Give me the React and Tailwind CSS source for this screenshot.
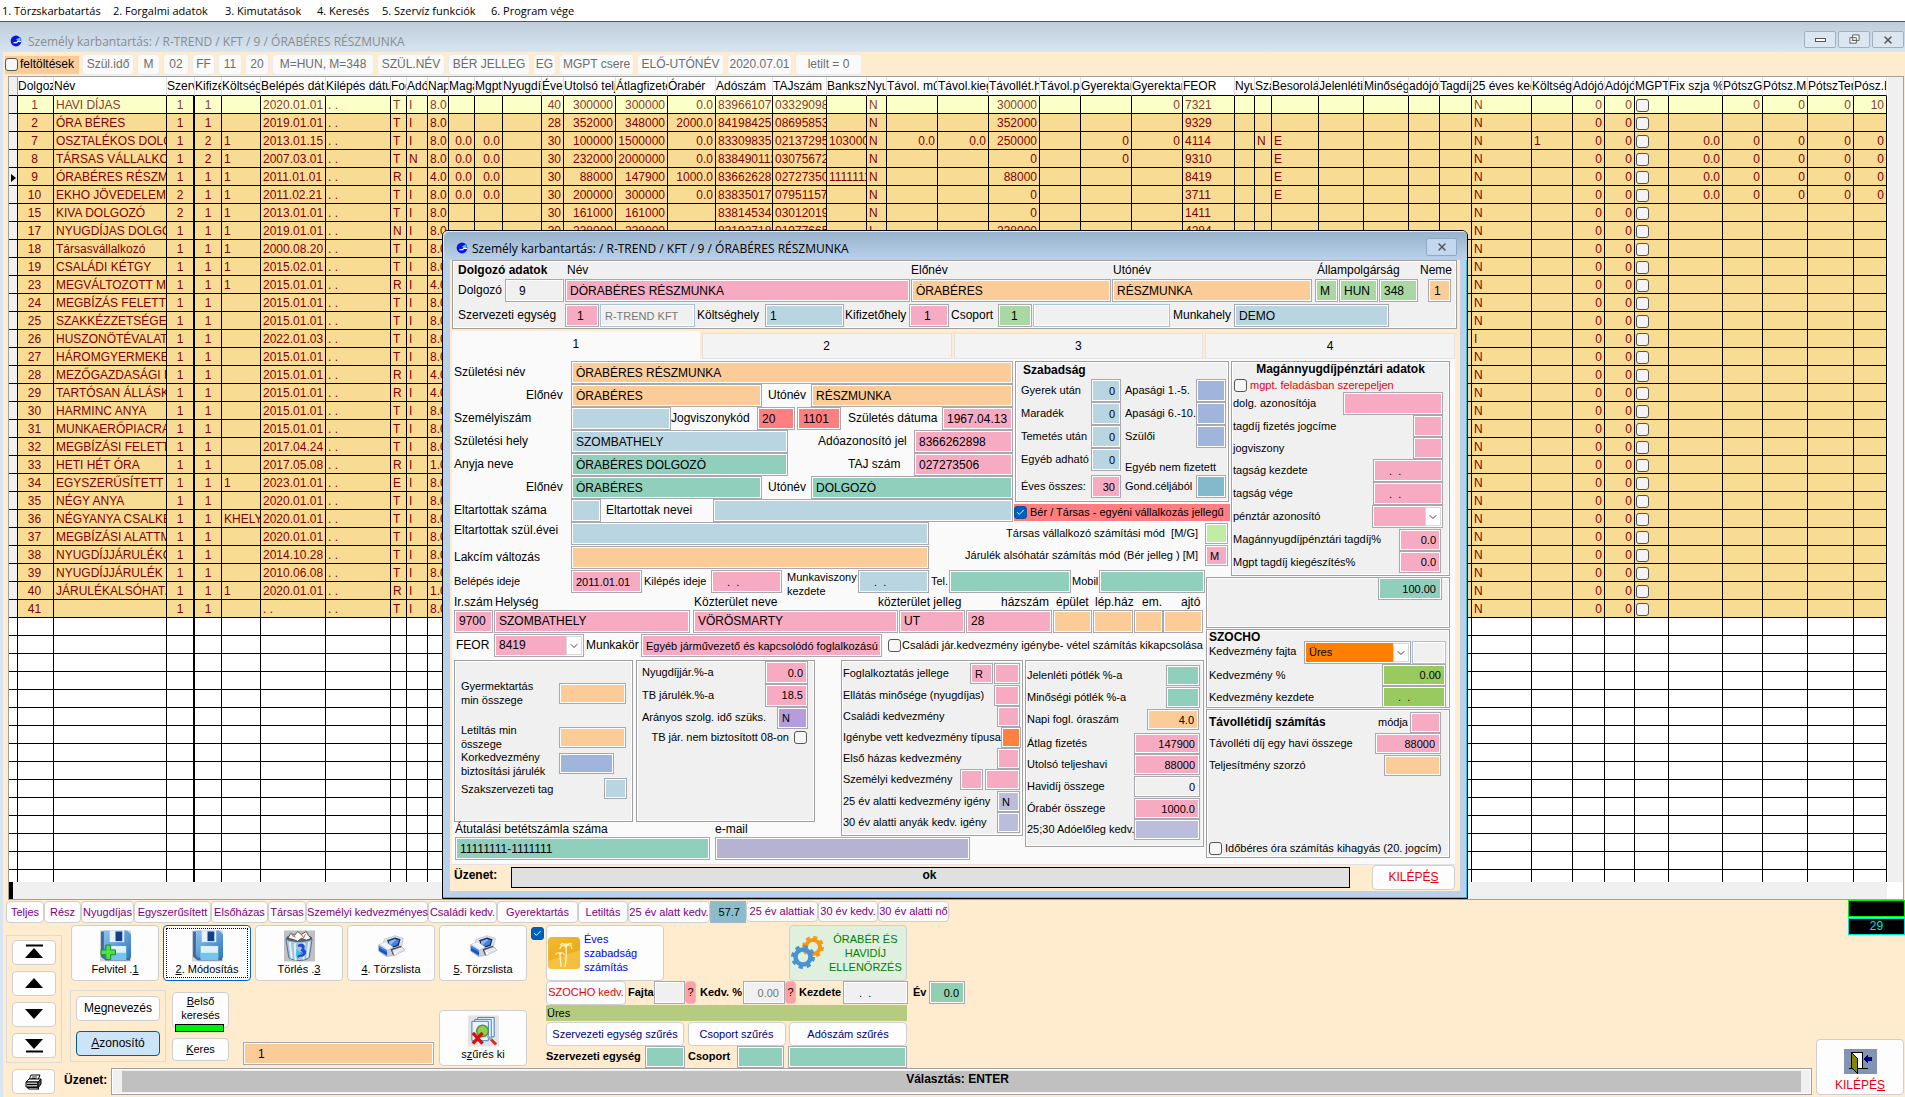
import React, { useId } from "react";
import { ChevronDown, X, Check } from "lucide-react";
import { twMerge } from "tailwind-merge";

const PINK = "bg-[#f7abc3]";
const ORANGE = "bg-[#fbcc98]";
const BLUE = "bg-[#b9d5e2]";
const TEAL = "bg-[#90cfbb]";
const GREEN = "bg-[#a9d8a2]";
const RED = "bg-[#ff7f80]";
const PERI = "bg-[#9fb5dc]";
const LAV = "bg-[#babddc]";
const GREY = "bg-[#f0f0f0]";

const inputBase =
  "min-w-0 shrink-0 rounded-none border border-[#a8a8ae] py-0 shadow-[inset_0_0_0_1px_#ffffff] outline-none";

function Field({ id, label, lc = "", name, ic = "", value = "" }) {
  const auto = useId();
  const key = id || auto;
  return (
    <>
      {label && (
        <label htmlFor={key} className={`shrink-0 whitespace-nowrap ${lc}`}>
          {label}
        </label>
      )}
      <input
        id={key}
        aria-label={label || id ? undefined : name}
        defaultValue={value}
        className={twMerge(inputBase, ic)}
      />
    </>
  );
}

function Combo({ label, lc = "", value = "", ic = "" }) {
  const key = useId();
  return (
    <>
      <label htmlFor={key} className={`shrink-0 whitespace-nowrap ${lc}`}>
        {label}
      </label>
      <span className={`relative flex h-[23px] shrink-0 ${ic}`}>
        <select
          id={key}
          defaultValue={value}
          className="w-full appearance-none rounded-none border border-[#a8a8ae] bg-transparent pl-[4px] shadow-[inset_0_0_0_1px_#ffffff]"
        >
          <option>{value}</option>
        </select>
        <span className="pointer-events-none absolute inset-y-[2px] right-[2px] flex w-[16px] items-center justify-center border border-[#d8d8d8] bg-white">
          <ChevronDown className="size-[12px] shrink-0 text-[#444]" strokeWidth={2} />
        </span>
      </span>
    </>
  );
}

function Tick({ label, checked = false, className = "", textClass = "" }) {
  return (
    <label className={`flex shrink-0 items-center whitespace-nowrap ${className}`}>
      <span className="relative flex size-[13px] shrink-0">
        <input
          type="checkbox"
          aria-label={label || "Jelölő"}
          defaultChecked={checked}
          className="peer size-[13px] appearance-none rounded-[3px] border border-[#555] bg-[#f6f6f6] checked:border-[#0058b0] checked:bg-[#005fb8]"
        />
        <Check
          className="pointer-events-none absolute inset-0 m-[2px] hidden size-[9px] text-white peer-checked:block"
          strokeWidth={2.5}
        />
      </span>
      {label && <span className={textClass}>{label}</span>}
    </label>
  );
}

function Btn({ className = "", children, ...rest }) {
  return (
    <button
      type="button"
      className={twMerge("shrink-0 whitespace-nowrap rounded-[4px] border border-[#cfcfcf]", className)}
      {...rest}
    >
      {children}
    </button>
  );
}

function Panel({ className = "", children }) {
  return (
    <section
      className={`shrink-0 border border-[#a0a0a0] bg-[#f0f0f0] shadow-[inset_0_0_0_1px_#ffffff] ${className}`}
    >
      {children}
    </section>
  );
}

/* ---------- icons ---------- */

function AppIcon() {
  return (
    <svg viewBox="0 0 12 12" className="size-[12px] shrink-0">
      <circle cx="6" cy="6" r="5.4" fill="#0b14e0" />
      <path d="M6 4.6 9.5 2.5 11 5 8 6.2z" fill="#35d8f0" />
      <path d="M3.5 7.6h3.2l1-1.2h3.6" stroke="#fff" strokeWidth="1.2" fill="none" />
    </svg>
  );
}

function Floppy({ plus }) {
  return (
    <svg viewBox="0 0 32 32" className="h-[32px] w-[31px]">
      <defs>
        <linearGradient id="flop" x1="0" y1="0" x2="1" y2="1">
          <stop offset="0" stopColor="#8fc4ee" />
          <stop offset="1" stopColor="#2f78c0" />
        </linearGradient>
      </defs>
      <rect width="32" height="32" fill="#d3d3d3" />
      <path d="M1 1h26l4 5v25H6l-5-4z" fill="#3a6ca8" />
      <path d="M4 0h24l4 4v24H6l-2-3z" fill="url(#flop)" />
      <rect x="10" y="0" width="15" height="12" fill="#e8f0fa" />
      <rect x="16" y="1" width="7" height="10" fill="#123f86" />
      <rect x="9" y="16" width="18" height="14" fill="#ddf1fb" />
      <rect x="9" y="23" width="18" height="7" fill="#6fc6ea" />
      {plus && (
        <path
          d="M6 15h5v5h5v5h-5v5H6v-5H1v-5h5z"
          fill="#4be04b"
          stroke="#1b8a1b"
          strokeWidth="1"
        />
      )}
    </svg>
  );
}

function Bin() {
  return (
    <svg viewBox="0 0 32 32" className="h-[32px] w-[31px]">
      <rect width="32" height="32" fill="#c0c0c0" />
      <path d="M2 9h27l-3 19c-5 4-16 4-21 0z" fill="#a5c3de" stroke="#54708c" />
      <path d="M6 12l2 17M11 13l1 18M21 13l-1 17M26 12l-2 16" stroke="#e6f1fa" strokeWidth="2" />
      <ellipse cx="15.500" cy="8" rx="13.500" ry="4" fill="#5b6874" />
      <path
        d="M4 8l3-5 4 2 3-4 4 3 5-3 2 4 3 3-5 2-5-2-4 3-5-2z"
        fill="#fff"
        stroke="#333"
        strokeWidth=".8"
      />
      <path d="M8 5l4 2M17 3l3 4M22 4l-2 4" stroke="#c05030" />
      <path
        d="M14 15c5-3 9 0 7 4 4 3 1 9-5 8l-2 2-1-7 6 1-2 2c3 0 3-3 0-4l1-2c2-1-1-3-3-2z"
        fill="#1d50d0"
      />
      <path d="M13 19l-1 8 6-3z" fill="#35c8ee" />
    </svg>
  );
}

function Printer() {
  return (
    <svg viewBox="0 0 32 32" className="mt-[3px] h-[32px] w-[31px]">
      <path d="M8 7 20 3l9 3-2 9-13 4-8-4z" fill="#dfe5ec" stroke="#a9b3bf" strokeWidth=".7" />
      <path d="M11 8 20 5l6 2-2 7-9 3z" fill="#1a2c58" />
      <path d="M13 9 20 6.500l4.500 1.500-2 5-7 2.500z" fill="#3f82e4" />
      <path d="M13 9 20 6.500l1 1.500-7 6z" fill="#8ab6f4" />
      <path d="M2 13 9 10l9 6-1 9-7 1-8-6z" fill="#c9ced6" stroke="#9aa2ad" strokeWidth=".6" />
      <path d="M2 14l9 5v6l-9-5.500z" fill="#1458c4" />
      <path d="M2 14l9 5v2l-9-5z" fill="#4b8bea" />
      <path d="M3 12.500 9.500 10l8 5.500-6 3z" fill="#f3f5f8" />
      <path d="M15 18 26 14l4 4-12 7z" fill="#40454e" />
      <path d="M17 19 27 15.500l4 3.500-12 6z" fill="#fdfdfd" stroke="#8c949f" strokeWidth=".6" />
      <path d="M19 20.500l8.500-3M21 22l8-3" stroke="#b9c0ca" strokeWidth=".7" />
    </svg>
  );
}

function SearchDocs() {
  return (
    <svg viewBox="0 0 32 32" className="h-[32px] w-[31px]">
      <rect width="32" height="32" fill="#e3e3e3" />
      <g fill="#eaf3fc" stroke="#3f7fd0" strokeWidth="1">
        <path d="M10 2h17v20H10z" />
        <path d="M7 4h17v20H7z" />
        <path d="M4 6h17v20H4z" />
      </g>
      <circle cx="15" cy="16" r="6" fill="#8ed048" stroke="#5a8a4a" strokeWidth="1.500" />
      <path d="M20 21 25 26" stroke="#9aa" strokeWidth="2.500" />
      <path d="M24 25 29 30" stroke="#d03020" strokeWidth="3" />
      <path d="M5 18 15 29M15 18 5 29" stroke="#d81010" strokeWidth="3.500" />
    </svg>
  );
}

function Palm() {
  return (
    <svg viewBox="0 0 32 32" className="size-[32px] shrink-0">
      <defs>
        <linearGradient id="sun" x1="0" y1="0" x2="1" y2="1">
          <stop offset="0" stopColor="#f2b92e" />
          <stop offset="1" stopColor="#eda40c" />
        </linearGradient>
      </defs>
      <rect width="32" height="32" rx="4" fill="url(#sun)" />
      <path d="M0 24 32 13v15a4 4 0 0 1-4 4H4a4 4 0 0 1-4-4z" fill="#f7cf5a" opacity=".6" />
      <g stroke="#fff3c4" strokeWidth="1.300" fill="none">
        <path d="M18 10c1 8 0 14-1 20M12 17c0 5 1 9 1 13" />
        <path d="M18 10c-3-3-6-1-6 2M18 10c-1-4-4-4-6-2M18 10c3-4 6-2 6 2M18 10c1-4 4-4 6-3M18 10V6" />
        <path d="M12 17c-2-2-4-1-4 1M12 17c2-2 4-1 4 1M12 17v-2" />
      </g>
    </svg>
  );
}

function Gears() {
  return (
    <svg viewBox="0 0 34 34" className="size-[34px] shrink-0">
      <g fill="none">
        <circle cx="22" cy="11" r="7" stroke="#f29a16" strokeWidth="4" />
        <circle cx="22" cy="11" r="9.500" stroke="#f29a16" strokeWidth="3" strokeDasharray="4 3.460" />
        <circle cx="12" cy="21" r="7.500" stroke="#4a93d2" strokeWidth="4.500" />
        <circle cx="12" cy="21" r="10.500" stroke="#4a93d2" strokeWidth="3" strokeDasharray="4.300 3.950" />
      </g>
    </svg>
  );
}

function Door() {
  return (
    <svg viewBox="0 0 33 25" className="h-[25px] w-[33px]" shapeRendering="crispEdges">
      <rect width="33" height="25" fill="#8294b4" />
      <path d="M5 19h19" stroke="#000" />
      <rect x="7" y="3" width="11" height="16" fill="#fff" stroke="#000" />
      <path d="M7 3l6 6v15l-6-6z" fill="#858500" stroke="#000" />
      <path d="M19 10l5-5v3h4v4h-4v3z" fill="#000080" />
    </svg>
  );
}

function SmallPrinter() {
  return (
    <svg viewBox="0 0 18 16" className="h-[16px] w-[18px]">
      <path d="M6 1h9l-2 5H4z" fill="#fff" stroke="#000" />
      <path d="M7 3h5M6 4.500h5" stroke="#000" strokeWidth=".8" />
      <path d="M1 8l3-3h12l-3 3z" fill="#fff" stroke="#000" />
      <path d="M1 8h12v5H1z" fill="#bbb" stroke="#000" />
      <path d="M13 8l3-3v5l-3 4z" fill="#555" stroke="#000" />
      <path d="M2 10.500h10M2 13.500h10l2 1.500H4z" stroke="#000" fill="#fff" />
    </svg>
  );
}

function Arrow({ kind }) {
  return (
    <svg viewBox="0 0 20 16" className="h-[16px] w-[20px]">
      {kind === "first" && <path d="M2 1.500h17" stroke="#000" strokeWidth="2" />}
      {kind === "first" && <path d="M10 4 19 14H1z" />}
      {kind === "up" && <path d="M10 3 19 13H1z" />}
      {kind === "down" && <path d="M10 13 19 3H1z" />}
      {kind === "last" && <path d="M10 12 19 2H1z" />}
      {kind === "last" && <path d="M2 14.500h17" stroke="#000" strokeWidth="2" />}
    </svg>
  );
}

/* ---------- grid ---------- */

const COLS = [
  ["", "w-[9px]", ""],
  ["Dolgozó", "w-[36px]", "text-center pr-[4px]"],
  ["Név", "w-[113px]", ""],
  ["Szerv", "w-[28px]", "text-center"],
  ["Kifizető", "w-[27px]", "text-center"],
  ["Költséghely", "w-[39px]", ""],
  ["Belépés dátum", "w-[65px]", ""],
  ["Kilépés dátum", "w-[65px]", ""],
  ["Fog", "w-[16px]", ""],
  ["Adó", "w-[21px]", ""],
  ["Napi", "w-[21px]", ""],
  ["Magán", "w-[26px]", "text-right"],
  ["Mgpt", "w-[28px]", "text-right"],
  ["Nyugdíj", "w-[39px]", ""],
  ["Éves", "w-[22px]", "text-right"],
  ["Utolsó teljes", "w-[52px]", "text-right"],
  ["Átlagfizetés", "w-[52px]", "text-right"],
  ["Órabér", "w-[48px]", "text-right"],
  ["Adószám", "w-[57px]", ""],
  ["TAJszám", "w-[54px]", ""],
  ["Bankszámla", "w-[40px]", ""],
  ["Nyug", "w-[20px]", ""],
  ["Távol. műszak", "w-[51px]", "text-right"],
  ["Távol.kieg", "w-[51px]", "text-right"],
  ["Távollét.havi", "w-[51px]", "text-right"],
  ["Távol.pótlék", "w-[41px]", ""],
  ["Gyerektartás", "w-[51px]", "text-right"],
  ["Gyerektartás", "w-[51px]", "text-right"],
  ["FEOR", "w-[52px]", ""],
  ["Nyug", "w-[20px]", ""],
  ["Szak", "w-[17px]", ""],
  ["Besorolás", "w-[47px]", ""],
  ["Jelenléti", "w-[45px]", ""],
  ["Minőségi", "w-[45px]", ""],
  ["adójóv", "w-[31px]", ""],
  ["Tagdíj", "w-[32px]", ""],
  ["25 éves kedv", "w-[60px]", ""],
  ["Költség", "w-[41px]", ""],
  ["Adójóv", "w-[32px]", "text-right"],
  ["Adójóv", "w-[30px]", "text-right"],
  ["MGPT", "w-[34px]", "check"],
  ["Fix szja %", "w-[54px]", "text-right"],
  ["PótszGy", "w-[40px]", "text-right"],
  ["Pótsz.Mar", "w-[45px]", "text-right"],
  ["PótszTem", "w-[46px]", "text-right"],
  ["Pósz.Egy", "w-[33px]", "text-right"],
];

const row = (no, name, unit, pay, cost, start, fo, hours, extra = {}) => ({
  1: no, 2: name, 3: unit, 4: pay, 5: cost, 6: start, 7: ". .", 8: fo, 9: "I", 10: hours,
  36: "N", 38: "0", 39: "0",
  ...extra,
});

const tail = { 31: "E", 41: "0.0", 42: "0", 43: "0", 44: "0", 45: "0" };

const ROWS = [
  row("1", "HAVI DÍJAS", "1", "1", "", "2020.01.01", "T", "8.0", { 14: "40", 15: "300000", 16: "300000", 17: "0.0", 18: "8396610722", 19: "033290982", 21: "N", 24: "300000", 27: "0", 28: "7321", 42: "0", 43: "0", 44: "0", 45: "10" }),
  row("2", "ÓRA BÉRES", "1", "1", "", "2019.01.01", "T", "8.0", { 14: "28", 15: "352000", 16: "348000", 17: "2000.0", 18: "8419842511", 19: "086958532", 21: "N", 24: "352000", 28: "9329" }),
  row("7", "OSZTALÉKOS DOLGOZÓ", "1", "2", "1", "2013.01.15", "T", "8.0", { 11: "0.0", 12: "0.0", 14: "30", 15: "100000", 16: "1500000", 17: "0.0", 18: "8330983511", 19: "021372958", 20: "10300002", 21: "N", 22: "0.0", 23: "0.0", 24: "250000", 26: "0", 27: "0", 28: "4114", 30: "N", 37: "1", ...tail }),
  row("8", "TÁRSAS VÁLLALKOZÓ", "1", "2", "1", "2007.03.01", "T", "8.0", { 9: "N", 11: "0.0", 12: "0.0", 14: "30", 15: "232000", 16: "2000000", 17: "0.0", 18: "8384901122", 19: "030756723", 21: "N", 24: "0", 26: "0", 28: "9310", ...tail }),
  row("9", "ÓRABÉRES RÉSZMUNKA", "1", "1", "1", "2011.01.01", "R", "4.0", { 11: "0.0", 12: "0.0", 14: "30", 15: "88000", 16: "147900", 17: "1000.0", 18: "8366262898", 19: "027273506", 20: "11111111", 21: "N", 24: "88000", 28: "8419", ...tail }),
  row("10", "EKHO JÖVEDELEM", "2", "1", "1", "2011.02.21", "T", "8.0", { 11: "0.0", 12: "0.0", 14: "30", 15: "200000", 16: "300000", 17: "0.0", 18: "8383501755", 19: "079511570", 21: "N", 24: "0", 28: "3711", ...tail }),
  row("15", "KIVA DOLGOZÓ", "2", "1", "1", "2013.01.01", "T", "8.0", { 14: "30", 15: "161000", 16: "161000", 18: "8381453411", 19: "030120196", 21: "N", 24: "0", 28: "1411" }),
  row("17", "NYUGDÍJAS DOLGOZÓ", "1", "1", "1", "2019.01.01", "N", "8.0", { 14: "30", 15: "238000", 16: "238000", 18: "8319271811", 19: "019776651", 21: "I", 24: "238000", 28: "4284" }),
  row("18", "Társasvállalkozó", "1", "1", "1", "2000.08.20", "T", "8.0"),
  row("19", "CSALÁDI KÉTGY", "1", "1", "1", "2015.02.01", "T", "8.0"),
  row("23", "MEGVÁLTOZOTT MUNKA", "1", "1", "1", "2015.01.01", "R", "4.0"),
  row("24", "MEGBÍZÁS FELETTNI", "1", "1", "", "2015.01.01", "T", "8.0"),
  row("25", "SZAKKÉZZETSÉGET", "1", "1", "", "2015.01.01", "T", "8.0"),
  row("26", "HUSZONÖTÉVALATTI", "1", "1", "", "2022.01.03", "T", "8.0", { 36: "I" }),
  row("27", "HÁROMGYERMEKES", "1", "1", "", "2015.01.01", "T", "8.0"),
  row("28", "MEZŐGAZDASÁGI MUN", "1", "1", "", "2015.01.01", "R", "4.0"),
  row("29", "TARTÓSAN ÁLLÁSKER", "1", "1", "", "2015.01.01", "R", "4.0"),
  row("30", "HARMINC ANYA", "1", "1", "", "2015.01.01", "T", "8.0"),
  row("31", "MUNKAERŐPIACRA", "1", "1", "", "2015.01.01", "T", "8.0"),
  row("32", "MEGBÍZÁSI FELETTI", "1", "1", "", "2017.04.24", "T", "8.0"),
  row("33", "HETI HÉT ÓRA", "1", "1", "", "2017.05.08", "R", "1.0"),
  row("34", "EGYSZERŰSÍTETT F", "1", "1", "1", "2023.01.01", "E", "8.0"),
  row("35", "NÉGY ANYA", "1", "1", "", "2020.01.01", "T", "8.0"),
  row("36", "NÉGYANYA CSALKED", "1", "1", "KHELY", "2020.01.01", "T", "8.0"),
  row("37", "MEGBÍZÁSI ALATTMI", "1", "1", "", "2020.01.01", "T", "8.0"),
  row("38", "NYUGDÍJJÁRULÉKOS", "1", "1", "", "2014.10.28", "T", "8.0"),
  row("39", "NYUGDÍJJÁRULÉK C", "1", "1", "", "2010.06.08", "T", "8.0"),
  row("40", "JÁRULÉKALSÓHATÁR", "1", "1", "1", "2020.01.01", "R", "1.0"),
  row("41", "", "1", "1", "", ". .", "T", "8.0"),
  ...Array.from({ length: 15 }, () => null),
];

function Grid() {
  return (
    <div className="ml-[5px] mr-px flex min-h-0 flex-1 flex-col border border-[#a0a0a0] bg-[#f0f0f0]">
      <div className="flex min-h-0 flex-1 overflow-hidden">
        <table className="h-0 w-[1878px] flex-1 table-fixed border-separate border-spacing-0 bg-white">
          <colgroup>
            {COLS.map((c, i) => (
              <col key={i} className={c[1]} />
            ))}
          </colgroup>
          <thead>
            <tr>
              {COLS.map((c, i) => (
                <th
                  key={i}
                  className={`h-[19px] overflow-hidden whitespace-nowrap border-b border-b-black p-0 text-left font-normal leading-[16px] ${
                    i === 0 ? "border-r border-r-[#a0a0a0] bg-[#f0f0f0]" : "border-r border-r-[#e0e0e0] bg-white"
                  }`}
                >
                  {c[0]}
                </th>
              ))}
            </tr>
          </thead>
          <tbody>
            {ROWS.map((r, y) => (
              <tr key={y} className={y === 0 ? "text-[#8a3c32]" : "text-[#800000]"}>
                {COLS.map((c, i) => (
                  <td
                    key={i}
                    className={`h-[18px] overflow-hidden whitespace-nowrap border-b border-black px-[2px] pb-0 pt-[2px] leading-[15px] ${
                      i === 3 ? "border-r-2" : "border-r"
                    } ${i === 0 ? (r ? "bg-[#f0f0f0]" : "bg-white") : !r ? "bg-white" : y === 0 ? "bg-[#fbffc8]" : "bg-[#f9dc94]"} ${
                      c[2] === "check" ? "" : c[2]
                    }`}
                  >
                    {i === 0 && y === 4 && (
                      <svg viewBox="0 0 5 8" className="h-[8px] w-[5px]">
                        <path d="M0 0l5 4-5 4z" />
                      </svg>
                    )}
                    {r && c[2] === "check" && (
                      <input
                        type="checkbox"
                        aria-label={`MGPT ${r[1]}`}
                        className="-ml-px block size-[13px] appearance-none rounded-[3px] border border-[#555] bg-[#f4f4f4]"
                      />
                    )}
                    {r && r[i]}
                  </td>
                ))}
              </tr>
            ))}
          </tbody>
        </table>
        <div className="w-[16px] shrink-0 border-l border-white bg-[#f0f0f0]" />
      </div>
      <div className="flex h-[17px] shrink-0 justify-between">
        <div className="w-[4px] bg-black" />
        <div className="w-[16px] bg-white" />
      </div>
    </div>
  );
}

/* ---------- header strips ---------- */

const MENU = [
  ["1. Törzskarbatartás", "w-[111px]"],
  ["2. Forgalmi adatok", "w-[112px]"],
  ["3. Kimutatások", "w-[92px]"],
  ["4. Keresés", "w-[65px]"],
  ["5. Szervíz funkciók", "w-[109px]"],
  ["6. Program vége", "w-[100px]"],
];

const TOOLS = [
  ["Szül.idő", "w-[52px]"],
  ["M", "w-[23px]"],
  ["02", "w-[26px]"],
  ["FF", "w-[23px]"],
  ["11", "w-[24px]"],
  ["20", "w-[24px]"],
  ["M=HUN, M=348", "w-[102px]"],
  ["SZÜL.NÉV", "w-[68px]"],
  ["BÉR JELLEG", "w-[82px]"],
  ["EG", "w-[23px]"],
  ["MGPT csere", "w-[75px]"],
  ["ELŐ-UTÓNÉV", "w-[87px]"],
  ["2020.07.01", "w-[65px]"],
  ["letilt = 0", "w-[67px]"],
];

const FILTERS_A = [
  ["Teljes", "w-[38px]"],
  ["Rész", "w-[37px]"],
  ["Nyugdíjas", "w-[53px]"],
  ["Egyszerűsített", "w-[77px]"],
  ["Elsőházas", "w-[57px]"],
  ["Társas", "w-[38px]"],
  ["Személyi kedvezményes", "w-[122px]"],
  ["Családi kedv.", "w-[69px]"],
  ["Gyerektartás", "w-[81px]"],
  ["Letiltás", "w-[50px]"],
  ["25 év alatt kedv.", "w-[82px]"],
];

const FILTERS_B = [
  ["25 év alattiak", "w-[72px]"],
  ["30 év kedv.", "w-[60px]"],
  ["30 év alatti nő", "w-[71px]"],
];

function BigBtn({ icon, active, children, className = "" }) {
  return (
    <Btn
      className={`flex h-[56px] w-[88px] flex-col items-center justify-between bg-[#fdfdfd] p-[2px] text-[11px] leading-[15px] ${
        active ? "border-[#0067c0]" : ""
      } ${className}`}
    >
      <span
        className={`flex h-full w-full flex-col items-center justify-between pt-px ${
          active ? "border border-dotted border-black" : "border border-transparent"
        }`}
      >
        {icon}
        <span>{children}</span>
      </span>
    </Btn>
  );
}

function BottomBar() {
  return (
    <div className="flex shrink-0 justify-between">
      <div className="flex min-w-0 flex-1 flex-col">
        <div className="flex h-[23px] items-start pl-[3px] pt-px text-[11px] text-[#800080]">
          {FILTERS_A.map(([t, w]) => (
            <Btn key={t} className={`h-[22px] bg-[#fdfdfd] px-0 ${w}`}>
              {t}
            </Btn>
          ))}
          <input aria-label="Százalék" defaultValue="57.7" className="h-[22px] w-[36px] shrink-0 border border-[#a8b4c8] bg-[#8cbccc] pr-[5px] text-right text-black" />
          {FILTERS_B.map(([t, w]) => (
            <Btn key={t} className={`h-[21px] bg-[#fdfdfd] px-0 ${w}`}>
              {t}
            </Btn>
          ))}
        </div>

        <div className="flex items-start pl-[3px]">
          <div className="mt-[12px] flex w-[56px] flex-col gap-[6px] border border-[#dcdcdc] py-[4px] pl-[5px]">
            {["first", "up", "down", "last"].map((k) => (
              <Btn key={k} aria-label={k} className="flex h-[25px] w-[44px] items-center justify-center bg-[#fdfdfd] pb-[2px]">
                <Arrow kind={k} />
              </Btn>
            ))}
          </div>

          <div className="ml-[9px] mt-[2px] flex w-[457px] flex-col">
            <div className="flex gap-[4px]">
              <BigBtn icon={<Floppy plus />}>Felvitel .<u>1</u></BigBtn>
              <BigBtn icon={<Floppy />} active><u>2</u>. Módosítás</BigBtn>
              <BigBtn icon={<Bin />}>Törlés .<u>3</u></BigBtn>
              <BigBtn icon={<Printer />}><u>4</u>. Törzslista</BigBtn>
              <BigBtn icon={<Printer />}><u>5</u>. Törzslista</BigBtn>
            </div>
            <div className="flex h-[85px] items-start">
              <div className="-ml-px mt-[9px] flex w-[96px] flex-col gap-[10px] border border-[#dcdcdc] p-[5px]">
                <Btn className="h-[25px] bg-[#fdfdfd]">M<u>e</u>gnevezés</Btn>
                <Btn className="h-[25px] border-[#005a9e] bg-[#cce4f7]"><u>A</u>zonosító</Btn>
              </div>
              <div className="ml-[6px] mt-[11px] w-[57px] text-[11px]">
                <Btn className="h-[36px] w-full bg-[#fdfdfd] pb-[4px] leading-[14px]">
                  <u>B</u>első<br />keresés
                </Btn>
                <div className="relative -mt-[4px] ml-[3px] h-[8px] w-[49px] border border-black bg-[#00f000]" />
                <Btn className="mt-[6px] h-[23px] w-full bg-[#fdfdfd]"><u>K</u>eres</Btn>
              </div>
              <Field name="Keresett érték" value="1" ic={`ml-[14px] mt-[61px] h-[23px] w-[191px] pl-[14px] ${ORANGE}`} />
              <BigBtn icon={<SearchDocs />} className="ml-[5px] mt-[29px]">s<u>z</u>űrés ki</BigBtn>
            </div>
          </div>

          <Tick checked className="ml-[3px] mt-[4px]" />

          <div className="ml-[2px] mt-[2px] flex flex-col">
            <div className="flex w-[361px] justify-between">
              <Btn className="flex h-[56px] w-[118px] items-center gap-[4px] bg-[#fdfdfd] pl-px text-left text-[11px] leading-[14px] text-[#0000e8]">
                <Palm />
                <span>Éves<br />szabadság<br />számítás</span>
              </Btn>
              <Btn className="flex h-[56px] w-[118px] items-center gap-[4px] bg-[#dff0df] pl-px text-center text-[11px] leading-[14px] text-[#008000]">
                <Gears />
                <span>ÓRABÉR ÉS<br />HAVIDÍJ<br />ELLENŐRZÉS</span>
              </Btn>
            </div>
            <div className="flex h-[23px] items-center text-[11px]">
              <Btn className="h-[24px] w-[80px] bg-[#fdfdfd] px-0 text-red-600">SZOCHO kedv.</Btn>
              <Field label="Fajta" lc="w-[28px] pl-[2px] font-bold" ic={`h-[23px] w-[31px] ${GREY}`} />
              <Btn className="h-[23px] w-[11px] border-[#ffb0b0] bg-[#ffa0a4] px-0">?</Btn>
              <Field label="Kedv. %" lc="w-[47px] pl-[4px] font-bold" value="0.00" ic={`h-[23px] w-[42px] pr-[5px] text-right text-[#777] ${GREY}`} />
              <Btn className="h-[23px] w-[11px] border-[#ffb0b0] bg-[#ffa0a4] px-0">?</Btn>
              <Field label="Kezdete" lc="w-[47px] pl-[3px] font-bold" value=".  ." ic={`h-[23px] w-[65px] pl-[15px] ${GREY}`} />
              <Field label="Év" lc="w-[21px] pl-[5px] font-bold" value="0.0" ic="h-[23px] w-[36px] bg-[#90cfb0] pr-[5px] text-right" />
            </div>
            <div className="mt-px h-[17px] w-[361px] border-b border-[#ffebcd] bg-[#b5cc80] pl-px text-[11px] leading-[16px]">Üres</div>
            <div className="flex h-[24px] w-[361px] justify-between text-[11px] text-[#000080]">
              <Btn className="w-[138px] bg-[#fdfdfd]">Szervezeti egység szűrés</Btn>
              <Btn className="w-[98px] bg-[#fdfdfd]">Csoport szűrés</Btn>
              <Btn className="w-[118px] bg-[#fdfdfd]">Adószám szűrés</Btn>
            </div>
            <div className="flex h-[22px] text-[11px]">
              <Field label="Szervezeti egység" lc="w-[99px] pt-[3px] font-bold" ic={`h-[22px] w-[40px] ${TEAL}`} />
              <Field label="Csoport" lc="w-[52px] pl-[3px] pt-[3px] font-bold" ic={`h-[22px] w-[47px] ${TEAL}`} />
              <Field name="Adószám" ic={`ml-[4px] h-[22px] w-[119px] ${TEAL}`} />
            </div>
          </div>
        </div>

        <div className="flex items-center pb-[2px] pl-[9px]">
          <Btn aria-label="Nyomtatás" className="flex h-[25px] w-[43px] items-center justify-center bg-[#fdfdfd]">
            <SmallPrinter />
          </Btn>
          <span className="w-[56px] shrink-0 pb-[2px] pl-[9px] font-bold">Üzenet:</span>
          <div className={`h-[27px] min-w-0 flex-1 border border-[#a0a0a0] px-[10px] py-[2px] shadow-[inset_0_0_0_1px_#ffffff] ${GREY}`}>
            <div className="h-full bg-[#c0c0c0] pr-[8px] text-center font-bold leading-[17px]">Választás: ENTER</div>
          </div>
        </div>
      </div>

      <div className="flex w-[93px] shrink-0 flex-col items-end justify-between pb-[2px]">
        <div className="w-[57px] text-center text-[#00e0e0]">
          <div className="h-[17px] border border-[#00f000] bg-black" />
          <div className="mt-px h-[17px] border border-[#00e0e0] bg-black leading-[15px]">29</div>
        </div>
        <Btn className="mr-px flex h-[56px] w-[88px] flex-col items-center justify-end gap-[4px] bg-[#fdfdfd] pb-px text-red-600">
          <Door />
          <span>KILÉPÉ<u>S</u></span>
        </Btn>
      </div>
    </div>
  );
}

/* ---------- dialog ---------- */

function DialogHeader() {
  return (
    <Panel className="ml-[2px] mr-[3px] h-[69px]">
      <div className="flex h-[17px] items-center whitespace-nowrap pt-[2px]">
        <span className="w-[114px] pl-[5px] font-bold">Dolgozó adatok</span>
        <label htmlFor="nev" className="w-[344px]">Név</label>
        <label htmlFor="elonev" className="w-[202px]">Előnév</label>
        <label htmlFor="utonev" className="w-[204px]">Utónév</label>
        <label htmlFor="allam" className="w-[103px]">Állampolgárság</label>
        <label htmlFor="neme">Neme</label>
      </div>
      <div className="mt-px flex h-[23px] items-center">
        <Field label="Dolgozó" lc="w-[52px] pl-[5px]" value="9" ic={`h-[23px] w-[59px] pl-[13px] ${GREY}`} />
        <Field id="nev" value="DÓRABÉRES RÉSZMUNKA" ic={`ml-px h-[23px] w-[345px] pl-[4px] ${PINK}`} />
        <Field id="elonev" value="ÓRABÉRES" ic={`ml-px h-[23px] w-[200px] pl-[4px] ${ORANGE}`} />
        <Field id="utonev" value="RÉSZMUNKA" ic={`ml-px h-[23px] w-[200px] pl-[4px] ${ORANGE}`} />
        <Field id="allam" value="M" ic={`ml-[3px] h-[23px] w-[23px] pl-[4px] ${GREEN}`} />
        <Field name="Országkód" value="HUN" ic={`ml-px h-[23px] w-[39px] pl-[4px] ${GREEN}`} />
        <Field name="Ország szám" value="348" ic={`ml-px h-[23px] w-[39px] pl-[4px] ${GREEN}`} />
        <Field id="neme" value="1" ic={`ml-[10px] h-[23px] w-[23px] pl-[5px] ${ORANGE}`} />
      </div>
      <div className="mt-[2px] flex h-[23px] items-center">
        <Field label="Szervezeti egység" lc="w-[112px] pl-[5px]" value="1" ic={`h-[23px] w-[34px] pl-[11px] ${PINK}`} />
        <Field name="Szervezeti egység neve" value="R-TREND KFT" ic={`ml-px h-[23px] w-[95px] border-[#a9c0dc] pl-[4px] text-[11px] text-[#777] ${GREY}`} />
        <Field label="Költséghely" lc="w-[70px] pl-[2px]" value="1" ic={`h-[23px] w-[79px] pl-[4px] ${BLUE}`} />
        <Field label="Kifizetőhely" lc="w-[65px] pl-px" value="1" ic={`h-[23px] w-[40px] pl-[14px] ${PINK}`} />
        <Field label="Csoport" lc="w-[49px] pl-[2px]" value="1" ic={`h-[23px] w-[34px] pl-[12px] ${GREEN}`} />
        <Field name="Csoport neve" ic={`ml-px h-[23px] w-[137px] border-[#a9c0dc] ${GREY}`} />
        <Field label="Munkahely" lc="w-[64px] pl-[3px]" value="DEMO" ic={`h-[23px] w-[155px] pl-[4px] ${BLUE}`} />
      </div>
    </Panel>
  );
}

function PersonForm() {
  const r = "flex h-[23px] items-center";
  const L = "w-[119px] pl-[2px]";
  return (
    <div className="w-[562px] shrink-0">
      <div className={r}>
        <Field label="Születési név" lc={L} value="ÓRABÉRES RÉSZMUNKA" ic={`h-[23px] w-[442px] pl-[4px] ${ORANGE}`} />
      </div>
      <div className={r}>
        <Field label="Előnév" lc="w-[119px] pl-[74px]" value="ÓRABÉRES" ic={`h-[23px] w-[191px] pl-[4px] ${ORANGE}`} />
        <Field label="Utónév" lc="w-[49px] pl-[6px]" value="RÉSZMUNKA" ic={`h-[23px] w-[202px] pl-[4px] ${ORANGE}`} />
      </div>
      <div className={r}>
        <Field label="Személyiszám" lc={L} ic={`h-[23px] w-[100px] ${BLUE}`} />
        <Field label="Jogviszonykód" lc="w-[86px]" value="20" ic={`h-[23px] w-[38px] pl-[4px] ${RED}`} />
        <Field name="Jogviszony alkód" value="1101" ic={`ml-[2px] h-[23px] w-[44px] pl-[5px] ${RED}`} />
        <Field label="Születés dátuma" lc="w-[101px] pl-[7px]" value="1967.04.13" ic={`h-[23px] w-[71px] pl-[4px] ${PINK}`} />
      </div>
      <div className={r}>
        <Field label="Születési hely" lc={L} value="SZOMBATHELY" ic={`h-[23px] w-[217px] pl-[4px] ${BLUE}`} />
        <Field label="Adóazonosító jel" lc="w-[126px] pl-[30px]" value="8366262898" ic={`h-[23px] w-[99px] pl-[4px] ${PINK}`} />
      </div>
      <div className={r}>
        <Field label="Anyja neve" lc={L} value="ÓRABÉRES DOLGOZÓ" ic={`h-[23px] w-[217px] pl-[4px] ${TEAL}`} />
        <Field label="TAJ szám" lc="w-[126px] pl-[60px]" value="027273506" ic={`h-[23px] w-[99px] pl-[4px] ${PINK}`} />
      </div>
      <div className={r}>
        <Field label="Előnév" lc="w-[119px] pl-[74px]" value="ÓRABÉRES" ic={`h-[23px] w-[191px] pl-[4px] ${TEAL}`} />
        <Field label="Utónév" lc="w-[49px] pl-[6px]" value="DOLGOZÓ" ic={`h-[23px] w-[202px] pl-[4px] ${TEAL}`} />
      </div>
      <div className={r}>
        <Field label="Eltartottak száma" lc={L} ic={`h-[23px] w-[30px] ${BLUE}`} />
        <Field label="Eltartottak nevei" lc="w-[112px] pl-[5px]" ic={`h-[23px] w-[300px] ${BLUE}`} />
      </div>
      <div className={r}>
        <Field label="Eltartottak szül.évei" lc={`${L} -mt-[6px]`} ic={`h-[23px] w-[358px] ${BLUE}`} />
      </div>
      <div className={`mt-px ${r}`}>
        <Field label="Lakcím változás" lc={L} ic={`h-[23px] w-[358px] ${ORANGE}`} />
      </div>
    </div>
  );
}

function Leave() {
  const n = `h-[23px] w-[30px] pr-[5px] text-right ${BLUE}`;
  const r = "flex h-[23px] items-center";
  const L = "w-[70px]";
  const M = "w-[75px] pl-[4px]";
  return (
    <div className="flex w-[216px] shrink-0 flex-col text-[11px]">
      <Panel className="ml-px mr-px h-[141px] pl-[5px]">
        <h3 className="h-[17px] pl-[2px] text-[12px] font-bold leading-[16px]">Szabadság</h3>
        <div className={r}>
          <Field label="Gyerek után" lc={L} value="0" ic={n} />
          <Field label="Apasági 1.-5." lc={M} ic={`h-[23px] w-[30px] ${PERI}`} />
        </div>
        <div className={r}>
          <Field label="Maradék" lc={L} value="0" ic={n} />
          <Field label="Apasági 6.-10." lc={M} ic={`h-[23px] w-[30px] ${PERI}`} />
        </div>
        <div className={r}>
          <Field label="Temetés után" lc={L} value="0" ic={n} />
          <Field label="Szülői" lc={M} ic={`h-[23px] w-[30px] ${PERI}`} />
        </div>
        <div className={r}>
          <Field label="Egyéb adható" lc={L} value="0" ic={n} />
          <span className="whitespace-nowrap pl-[4px] pt-[16px]">Egyéb nem fizetett</span>
        </div>
        <div className={`mt-[4px] ${r}`}>
          <Field label="Éves összes:" lc={L} value="30" ic={`h-[23px] w-[30px] pr-[5px] text-right ${PINK}`} />
          <Field label="Gond.céljából" lc={M} ic="h-[23px] w-[30px] bg-[#82b9cc]" />
        </div>
      </Panel>
      <Tick label="Bér / Társas - egyéni vállalkozás jellegű" checked className="mt-[2px] h-[17px] bg-[#ff7f80]" textClass="pl-[3px]" />
      <div className="mt-[2px] flex h-[21px] items-center justify-end pr-[2px]">
        <Field label="Társas vállalkozó számítási mód  [M/G]" lc="mr-[7px] whitespace-pre" ic="h-[21px] w-[23px] bg-[#c0eca4]" />
      </div>
      <div className="mt-px flex h-[21px] items-center justify-end pr-[2px]">
        <Field label="Járulék alsóhatár számítás mód (Bér jelleg ) [M]" lc="mr-[7px]" value="M" ic={`h-[21px] w-[23px] pl-[4px] ${PINK}`} />
      </div>
    </div>
  );
}

function Fund() {
  const r = "flex items-center pr-[6px]";
  const L = "flex-1 pl-px";
  return (
    <Panel className="ml-[25px] h-[215px] text-[11px]">
      <h3 className="h-[16px] text-center text-[12px] font-bold leading-[15px]">Magánnyugdíjpénztári adatok</h3>
      <Tick label="mgpt. feladásban szerepeljen" className="h-[14px] pl-[2px] text-red-600" textClass="pl-[3px]" />
      <div className={`h-[23px] ${r}`}><Field label="dolg. azonosítója" lc={L} ic={`h-[23px] w-[100px] ${PINK}`} /></div>
      <div className={`h-[22px] ${r}`}><Field label="tagdíj fizetés jogcíme" lc={L} ic={`h-[22px] w-[30px] ${PINK}`} /></div>
      <div className={`h-[22px] ${r}`}><Field label="jogviszony" lc={L} ic={`h-[22px] w-[30px] ${PINK}`} /></div>
      <div className={`h-[23px] ${r}`}><Field label="tagság kezdete" lc={L} value=".  ." ic={`h-[23px] w-[70px] pl-[15px] ${PINK}`} /></div>
      <div className={`h-[23px] ${r}`}><Field label="tagság vége" lc={L} value=".  ." ic={`h-[23px] w-[70px] pl-[15px] ${PINK}`} /></div>
      <div className={`h-[23px] ${r}`}><Combo label="pénztár azonosító" lc={L} ic={`w-[71px] ${PINK}`} /></div>
      <div className={`h-[23px] ${r}`}><Field label="Magánnyugdíjpénztári tagdíj%" lc={L} value="0.0" ic={`mr-[2px] h-[22px] w-[42px] pr-[4px] text-right ${PINK}`} /></div>
      <div className={`h-[22px] ${r}`}><Field label="Mgpt tagdíj kiegészítés%" lc={L} value="0.0" ic={`mr-[2px] h-[22px] w-[42px] pr-[4px] text-right ${PINK}`} /></div>
    </Panel>
  );
}

function AddressRows() {
  return (
    <>
      <div className="mt-px flex h-[23px] items-center text-[11px]">
        <Field label="Belépés ideje" lc="w-[119px] pl-[2px]" value="2011.01.01" ic={`h-[23px] w-[71px] pl-[4px] ${PINK}`} />
        <Field label="Kilépés ideje" lc="w-[69px] pl-[2px]" value=".  ." ic={`h-[23px] w-[71px] pl-[15px] ${PINK}`} />
        <Field label={<>Munkaviszony<br />kezdete</>} lc="w-[76px] pl-[5px] leading-[14px] pt-[4px]" value=".  ." ic={`h-[23px] w-[71px] pl-[15px] ${BLUE}`} />
        <Field label="Tel." lc="w-[20px] pl-[2px]" ic={`h-[23px] w-[122px] ${TEAL}`} />
        <Field label="Mobil" lc="w-[28px] pl-px" ic={`h-[23px] w-[106px] ${TEAL}`} />
      </div>
      <div className="mt-px flex h-[16px] items-center whitespace-nowrap pl-[2px] pt-px">
        <label htmlFor="irsz" className="w-[41px]">Ir.szám</label>
        <label htmlFor="helyseg" className="w-[199px]">Helység</label>
        <label htmlFor="kozt" className="w-[184px]">Közterület neve</label>
        <label htmlFor="jelleg" className="w-[123px]">közterület jelleg</label>
        <label htmlFor="hazszam" className="w-[55px]">házszám</label>
        <label htmlFor="epulet" className="w-[39px]">épület</label>
        <label htmlFor="lephaz" className="w-[47px]">lép.ház</label>
        <label htmlFor="em" className="w-[39px]">em.</label>
        <label htmlFor="ajto">ajtó</label>
      </div>
      <div className="flex h-[23px] pl-[2px]">
        <Field id="irsz" value="9700" ic={`w-[39px] pl-[4px] ${PINK}`} />
        <Field id="helyseg" value="SZOMBATHELY" ic={`ml-px w-[196px] pl-[4px] ${PINK}`} />
        <Field id="kozt" value="VÖRÖSMARTY" ic={`ml-[3px] w-[205px] pl-[4px] ${PINK}`} />
        <Field id="jelleg" value="UT" ic={`ml-px w-[66px] pl-[4px] ${PINK}`} />
        <Field id="hazszam" value="28" ic={`ml-px w-[86px] pl-[4px] ${PINK}`} />
        <Field id="epulet" ic={`ml-px w-[39px] ${ORANGE}`} />
        <Field id="lephaz" ic={`ml-px w-[40px] ${ORANGE}`} />
        <Field id="em" ic={`ml-px w-[29px] ${ORANGE}`} />
        <Field id="ajto" ic={`w-[40px] ${ORANGE}`} />
      </div>
      <div className="mt-px flex h-[23px] items-center">
        <Combo label="FEOR" lc="w-[42px] pl-[4px]" value="8419" ic={`w-[90px] ${PINK}`} />
        <Field label="Munkakör" lc="w-[57px] pl-[2px]" value="Egyéb járművezető és kapcsolódó foglalkozású" ic={`h-[23px] w-[241px] pl-[4px] text-[11px] ${PINK}`} />
        <Tick label="Családi jár.kedvezmény igénybe- vétel számítás kikapcsolása" className="ml-[6px] text-[11px]" textClass="pl-px" />
      </div>
    </>
  );
}

function LowerPanels() {
  const r = "flex h-[21px] items-center";
  const L = "flex-1";
  const c = "h-[21px] w-[23px]";
  return (
    <div className="mt-[3px] flex items-start pl-[2px] text-[11px]">
      <div className="w-[571px] shrink-0">
        <div className="flex items-start">
          <Panel className="h-[162px] w-[179px] pl-[6px] pt-[18px] leading-[14px]">
            <div className="flex h-[28px] items-center">
              <Field label={<>Gyermektartás<br />min összege</>} lc="w-[98px]" ic={`h-[21px] w-[67px] ${ORANGE}`} />
            </div>
            <div className="mt-[16px] flex h-[28px] items-center">
              <Field label={<>Letiltás min<br />összege</>} lc="w-[98px]" ic={`h-[21px] w-[67px] ${ORANGE}`} />
            </div>
            <div className="flex h-[25px] items-center">
              <Field label={<>Korkedvezmény<br />biztosítási járulék</>} lc="w-[98px]" ic={`h-[21px] w-[55px] ${PERI}`} />
            </div>
            <div className="mt-[2px] flex h-[21px] items-center">
              <Field label="Szakszervezeti tag" lc="w-[143px]" ic={`h-[21px] w-[23px] ${BLUE}`} />
            </div>
          </Panel>
          <Panel className="ml-[3px] h-[162px] w-[179px] pl-[5px] pr-[6px]">
            <div className="flex h-[23px] items-center">
              <Field label="Nyugdíjjár.%-a" lc={L} value="0.0" ic={`h-[23px] w-[43px] pr-[4px] text-right ${PINK}`} />
            </div>
            <div className="flex h-[22px] items-center">
              <Field label="TB járulék.%-a" lc={L} value="18.5" ic={`h-[23px] w-[43px] pr-[4px] text-right ${PINK}`} />
            </div>
            <div className="flex h-[23px] items-center">
              <Field label="Arányos szolg. idő szüks." lc={L} value="N" ic="h-[22px] w-[31px] bg-[#b49ddc] pl-[4px]" />
            </div>
            <div className="flex h-[17px] items-center justify-end gap-[5px] pr-px">
              <label htmlFor="tb08">TB jár. nem biztosított 08-on</label>
              <input id="tb08" type="checkbox" className="size-[13px] appearance-none rounded-[3px] border border-[#555] bg-[#f6f6f6]" />
            </div>
          </Panel>
          <Panel className="ml-[26px] h-[176px] w-[182px] pl-px pr-[2px] pt-[2px]">
            <div className={r}>
              <Field label="Foglalkoztatás jellege" lc={L} value="R" ic={`pl-[4px] ${c} ${PINK}`} />
              <Field name="Foglalkoztatás jelleg 2" ic={`ml-px h-[21px] w-[26px] ${PINK}`} />
            </div>
            <div className={`mt-px ${r}`}><Field label="Ellátás minősége (nyugdíjas)" lc={L} ic={`h-[21px] w-[26px] ${PINK}`} /></div>
            <div className={r}><Field label="Családi kedvezmény" lc={L} ic={`${c} ${PINK}`} /></div>
            <div className={r}><Field label="Igénybe vett kedvezmény típusa" lc={L} ic="h-[21px] w-[20px] bg-[#ff8040]" /></div>
            <div className={r}><Field label="Első házas kedvezmény" lc={L} ic={`${c} ${PINK}`} /></div>
            <div className={r}>
              <Field label="Személyi kedvezmény" lc={L} ic={`${c} ${PINK}`} />
              <Field name="Személyi kedvezmény értéke" ic={`ml-[2px] h-[21px] w-[35px] ${PINK}`} />
            </div>
            <div className={`mt-px ${r}`}><Field label="25 év alatti kedvezmény igény" lc={L} value="N" ic={`pl-[4px] ${c} ${LAV}`} /></div>
            <div className={r}><Field label="30 év alatti anyák kedv. igény" lc={L} ic={`${c} ${LAV}`} /></div>
          </Panel>
        </div>
        <div className="-mt-[14px] flex w-[520px] gap-[5px] pl-px text-[12px]">
          <div className="flex w-[255px] flex-col">
            <Field label="Átutalási betétszámla száma" lc="h-[15px] leading-[15px]" value="11111111-1111111" ic={`h-[23px] w-full pl-[4px] ${TEAL}`} />
          </div>
          <div className="flex w-[255px] flex-col">
            <Field label="e-mail" lc="h-[15px] leading-[15px]" ic="h-[23px] w-full bg-[#b4b4d2]" />
          </div>
        </div>
      </div>
      <Panel className="h-[187px] w-[179px] pl-px pr-[3px] pt-[4px]">
        <div className={r}><Field label="Jelenléti pótlék %-a" lc={L} ic={`h-[21px] w-[34px] ${TEAL}`} /></div>
        <div className={`mt-px ${r}`}><Field label="Minőségi pótlék %-a" lc={L} ic={`h-[21px] w-[34px] ${TEAL}`} /></div>
        <div className={`mt-px ${r}`}><Field label="Napi fogl. óraszám" lc={L} value="4.0" ic={`mr-px h-[21px] w-[52px] pr-[4px] text-right ${ORANGE}`} /></div>
        <div className={`mt-[3px] ${r}`}><Field label="Átlag fizetés" lc={L} value="147900" ic={`h-[21px] w-[66px] pr-[4px] text-right ${PINK}`} /></div>
        <div className={r}><Field label="Utolsó teljeshavi" lc={L} value="88000" ic={`h-[21px] w-[66px] pr-[4px] text-right ${PINK}`} /></div>
        <div className={`mt-px ${r}`}><Field label="Havidíj összege" lc={L} value="0" ic={`h-[21px] w-[66px] pr-[4px] text-right ${GREY}`} /></div>
        <div className={`mt-px ${r}`}><Field label="Órabér összege" lc={L} value="1000.0" ic={`h-[21px] w-[66px] pr-[4px] text-right ${PINK}`} /></div>
        <div className="flex h-[20px] items-center"><Field label="25;30 Adóelőleg kedv." lc={L} ic={`h-[21px] w-[66px] ${LAV}`} /></div>
      </Panel>
    </div>
  );
}

function RightColumn() {
  const r = "flex items-center";
  const L = "flex-1 pl-[2px]";
  return (
    <div className="flex w-[244px] shrink-0 flex-col gap-px text-[11px]">
      <Fund />
      <Panel className="flex h-[51px] justify-end pr-[7px]">
        <Field name="Érték" value="100.00" ic={`-mt-px h-[23px] w-[64px] pr-[5px] text-right ${TEAL}`} />
      </Panel>
      <Panel className="h-[79px] pr-[3px]">
        <h3 className="h-[11px] pl-[2px] text-[12px] font-bold leading-[14px]">SZOCHO</h3>
        <div className={`h-[23px] ${r}`}>
          <Combo label="Kedvezmény fajta" lc="w-[97px] pl-[2px] pb-[3px]" value="Üres" ic="w-[107px] bg-[#ff8000]" />
          <Field name="Kedvezmény kód" ic={`ml-px h-[23px] w-[34px] border-[#a9c0dc] ${GREY}`} />
        </div>
        <div className={`h-[22px] ${r}`}><Field label="Kedvezmény %" lc={L} value="0.00" ic="h-[22px] w-[64px] bg-[#98ca60] pr-[4px] text-right" /></div>
        <div className={`h-[22px] ${r}`}><Field label="Kedvezmény kezdete" lc={L} value=".  ." ic="h-[22px] w-[64px] bg-[#98ca60] pl-[15px]" /></div>
      </Panel>
      <Panel className="flex h-[149px] flex-col pb-px pr-[8px] pt-[2px]">
        <div className={`h-[21px] ${r}`}>
          <h3 className="w-[171px] pl-[2px] text-[12px] font-bold">Távollétidíj számítás</h3>
          <Field label="módja" lc="flex-1" ic={`h-[21px] w-[31px] ${PINK}`} />
        </div>
        <div className={`h-[21px] ${r}`}><Field label="Távolléti díj egy havi összege" lc={L} value="88000" ic={`h-[21px] w-[66px] pr-[5px] text-right ${PINK}`} /></div>
        <div className={`mt-px h-[21px] ${r}`}><Field label="Teljesítmény szorzó" lc={L} ic={`h-[21px] w-[57px] ${ORANGE}`} /></div>
        <Tick label="Időbéres óra számítás kihagyás (20. jogcím)" className="mt-auto pl-[2px]" textClass="pl-[3px]" />
      </Panel>
    </div>
  );
}

function Dialog() {
  return (
    <div
      role="dialog"
      aria-label="Személy karbantartás"
      className="absolute left-[442px] top-[230px] w-[1026px] rounded-t-[6px] border border-black bg-[#b9d1ea] px-[7px] pb-[7px] shadow-[inset_-1px_-1px_0_#20c8e8]"
    >
      <div className="-mx-[7px] flex h-[29px] items-center rounded-t-[5px] bg-linear-to-b from-[#98b1cc] to-[#b9d1ea] pl-[13px] pr-[10px] pt-[5px] shadow-[inset_1px_1px_0_#dfeaf5]">
        <AppIcon />
        <h2 className="ml-[4px] flex-1 whitespace-nowrap font-['Open_Sans',sans-serif] text-[12px]">
          Személy karbantartás: / R-TREND / KFT / 9 / ÓRABÉRES RÉSZMUNKA
        </h2>
        <button type="button" aria-label="Bezárás" className="mb-[3px] flex h-[18px] w-[31px] items-center justify-center rounded-[2px] border border-[#8fa8c6] bg-[#c3d7ee]">
          <X className="size-[12px] text-[#555]" strokeWidth={3} />
        </button>
      </div>
      <div className="bg-[#ffebcd] pb-px">
        <DialogHeader />
        <div role="tablist" className="ml-[2px] mr-[5px] mt-[2px] flex h-[28px] items-end gap-[2px]">
          <button type="button" role="tab" aria-selected="true" className="h-[28px] flex-1 bg-[#fafafa] pb-[2px]">1</button>
          <button type="button" role="tab" className="h-[26px] flex-1 border border-[#e2e2e2] bg-[#f3f3f3]">2</button>
          <button type="button" role="tab" className="h-[26px] flex-1 border border-[#e2e2e2] bg-[#f3f3f3]">3</button>
          <button type="button" role="tab" className="h-[26px] flex-1 border border-[#e2e2e2] bg-[#f3f3f3]">4</button>
        </div>
        <div className="ml-[2px] mr-[5px] flex items-start border-b border-[#e2e2e2] bg-[#fafafa] pb-[4px] pt-[2px]">
          <div className="w-[754px] shrink-0">
            <div className="-mr-[25px] flex h-[208px] items-start">
              <PersonForm />
              <Leave />
            </div>
            <AddressRows />
            <LowerPanels />
          </div>
          <RightColumn />
        </div>
        <div className="mr-[5px] flex h-[25px] items-center">
          <span className="w-[61px] pb-[5px] pl-[4px] font-bold">Üzenet:</span>
          <div className="h-[21px] flex-1 border border-black bg-[#e0e0e0] pr-[2px] text-center font-bold leading-[15px]">ok</div>
          <Btn className="ml-[22px] h-[25px] w-[83px] bg-[#fdfdfd] text-red-600">KILÉPÉ<u>S</u></Btn>
        </div>
      </div>
    </div>
  );
}

export default function App() {
  return (
    <div className="relative flex h-screen flex-col overflow-hidden bg-[#ffebcd] font-['Liberation_Sans',Arial,sans-serif] text-[12px] leading-[15px] text-black">
      <nav className="flex h-[22px] shrink-0 items-center border-b border-[#555] bg-white pl-[2px] font-['Open_Sans',sans-serif] text-[11px]">
        {MENU.map(([t, w]) => (
          <button type="button" key={t} className={`shrink-0 whitespace-nowrap text-left ${w}`}>
            {t}
          </button>
        ))}
      </nav>
      <header className="flex h-[30px] shrink-0 items-center bg-linear-to-b from-[#bfcddb] to-[#d7e4f2] pl-[10px] pr-px pt-[8px]">
        <AppIcon />
        <h1 className="ml-[6px] flex-1 whitespace-nowrap font-['Open_Sans',sans-serif] text-[12px] text-[#8c8c8c]">
          Személy karbantartás: / R-TREND / KFT / 9 / ÓRABÉRES RÉSZMUNKA
        </h1>
        <div className="mb-[3px] flex gap-[2px]">
          <button type="button" aria-label="Kis méret" className="flex h-[17px] w-[32px] items-center justify-center rounded-[2px] border border-[#9fb0c2] bg-[#dce6f1]">
            <span className="h-[4px] w-[11px] border border-[#555] bg-white" />
          </button>
          <button type="button" aria-label="Előző méret" className="flex h-[17px] w-[32px] items-center justify-center rounded-[2px] border border-[#9fb0c2] bg-[#dce6f1]">
            <svg viewBox="0 0 12 12" className="size-[11px]" fill="#fff" stroke="#555">
              <path d="M4 1h7v6H4zM1 4h7v6H1zM3 7h3" />
            </svg>
          </button>
          <button type="button" aria-label="Bezárás" className="flex h-[17px] w-[32px] items-center justify-center rounded-[2px] border border-[#9fb0c2] bg-[#dce6f1]">
            <X className="size-[12px] text-[#555]" strokeWidth={3} />
          </button>
        </div>
      </header>
      <main className="flex min-h-0 flex-1 flex-col border-l-[3px] border-[#d7e4f2]">
        <div className="flex h-[24px] shrink-0 items-center gap-[3px] pl-[2px] pt-px text-[#6d6d6d]">
          <Tick label="feltöltések" className="h-[18px] w-[74px] bg-[#fbcc98] text-black" textClass="pl-[2px]" />
          {TOOLS.map(([t, w]) => (
            <Btn key={t} className={`h-[21px] border-[#ececec] bg-[#fafafa] px-0 ${w}`}>
              {t}
            </Btn>
          ))}
        </div>
        <Grid />
        <BottomBar />
      </main>
      <Dialog />
    </div>
  );
}
